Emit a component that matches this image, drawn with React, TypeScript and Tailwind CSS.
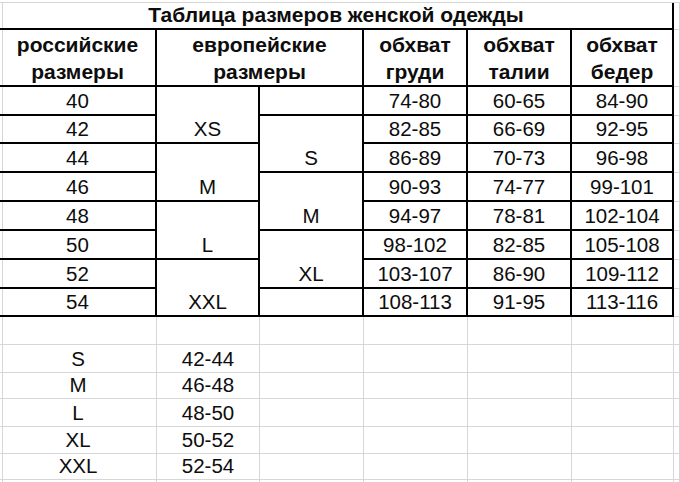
import React from 'react';

// Grid borders: heavy black for the sized table, light grey for the sheet gridlines
const black = 'border-r-2 border-b-2 border-black';
const grey = 'border-r border-b border-[#d6d6d6]';
const leftGrid = 'bg-[linear-gradient(to_right,transparent_2px,#d6d6d6_2px,#d6d6d6_3px,transparent_3px)]';
const head = 'font-bold text-[21px]';

function Cell({ className = '', children }: { className?: string; children?: React.ReactNode }) {
  return (
    <div className={`flex flex-col items-center justify-end text-center leading-[27px] ${className}`}>
      {children}
    </div>
  );
}

const rows: { ru: string; chest: string; waist: string; hips: string }[] = [
  { ru: '40', chest: '74-80', waist: '60-65', hips: '84-90' },
  { ru: '42', chest: '82-85', waist: '66-69', hips: '92-95' },
  { ru: '44', chest: '86-89', waist: '70-73', hips: '96-98' },
  { ru: '46', chest: '90-93', waist: '74-77', hips: '99-101' },
  { ru: '48', chest: '94-97', waist: '78-81', hips: '102-104' },
  { ru: '50', chest: '98-102', waist: '82-85', hips: '105-108' },
  { ru: '52', chest: '103-107', waist: '86-90', hips: '109-112' },
  { ru: '54', chest: '108-113', waist: '91-95', hips: '113-116' },
];

// merged european cells, keyed by row index where they start
const euroA: Record<number, string> = { 0: 'XS', 2: 'M', 4: 'L', 6: 'XXL' };
const euroB: Record<number, string> = { 1: 'S', 3: 'M', 5: 'XL' };

const legend = [
  ['', ''],
  ['S', '42-44'],
  ['M', '46-48'],
  ['L', '48-50'],
  ['XL', '50-52'],
  ['XXL', '52-54'],
  ['', ''],
];

export default function App() {
  return (
    <div className="w-[680px] h-[482px] overflow-hidden bg-white pt-[2px] font-['Liberation_Sans',Arial,sans-serif] text-[20.5px] text-[#0d0d0d]">
      <div className="grid border-t border-[#d6d6d6] grid-cols-[157px_103px_104px_104px_104px_102px_6px] grid-rows-[27px_57px_29px_28px_29px_29px_29px_29px_29px_28px_28px_28px_26px_28px_27px_26px_20px]">
        {/* title */}
        <Cell className={`col-span-6 ${head} ${black} ${leftGrid}`}>Таблица размеров женской одежды</Cell>
        <Cell className={grey} />

        {/* header */}
        <Cell className={`${head} ${black} ${leftGrid}`}>
          <span>российские</span>
          <span>размеры</span>
        </Cell>
        <Cell className={`col-span-2 ${head} ${black}`}>
          <span>европейские</span>
          <span>размеры</span>
        </Cell>
        <Cell className={`${head} ${black}`}>
          <span>обхват</span>
          <span>груди</span>
        </Cell>
        <Cell className={`${head} ${black}`}>
          <span>обхват</span>
          <span>талии</span>
        </Cell>
        <Cell className={`${head} ${black}`}>
          <span>обхват</span>
          <span>бедер</span>
        </Cell>
        <Cell className={grey} />

        {rows.map((r, i) => (
          <React.Fragment key={r.ru}>
            <Cell className={`${black} ${leftGrid}`}>{r.ru}</Cell>
            {euroA[i] !== undefined && <Cell className={`row-span-2 ${black}`}>{euroA[i]}</Cell>}
            {euroB[i] !== undefined && <Cell className={`row-span-2 ${black}`}>{euroB[i]}</Cell>}
            {(i === 0 || i === 7) && <Cell className={black} />}
            <Cell className={black}>{r.chest}</Cell>
            <Cell className={black}>{r.waist}</Cell>
            <Cell className={black}>{r.hips}</Cell>
            <Cell className={grey} />
          </React.Fragment>
        ))}

        {legend.map(([size, range], i) => (
          <React.Fragment key={i}>
            <Cell className={`${grey} ${leftGrid}`}>{size}</Cell>
            <Cell className={grey}>{range}</Cell>
            <Cell className={grey} />
            <Cell className={grey} />
            <Cell className={grey} />
            <Cell className={grey} />
            <Cell className={grey} />
          </React.Fragment>
        ))}
      </div>
    </div>
  );
}
